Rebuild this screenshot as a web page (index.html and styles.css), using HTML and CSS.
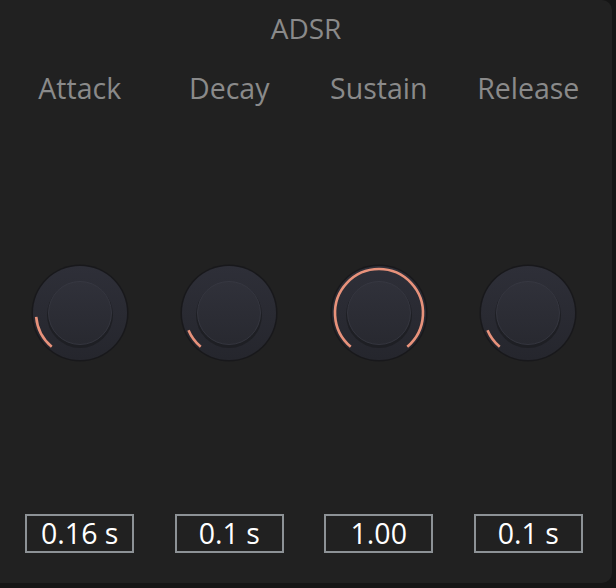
FILE: index.html
```html
<!DOCTYPE html>
<html lang="en">

<head>
  <meta charset="UTF-8">
  <meta name="viewport" content="width=device-width, initial-scale=1.0">
  <title>ADSR</title>
  <link rel="stylesheet" href="styles.css">
</head>

<body>

  <div class="panel">
    <h1 class="title">ADSR</h1>

    <!-- envelope strips -->
    <div class="strips">

      <div class="strip">
        <p class="label">Attack</p>
        <svg class="knob" viewBox="0 0 100 100" width="100" height="100">
          <defs>
            <linearGradient id="body" x1="0" y1="0" x2="0" y2="1">
              <stop offset="0" stop-color="#2e2f38" />
              <stop offset="1" stop-color="#25262d" />
            </linearGradient>
            <linearGradient id="cap" x1="0" y1="0" x2="0" y2="1">
              <stop offset="0" stop-color="#30313a" />
              <stop offset="1" stop-color="#282930" />
            </linearGradient>
          </defs>
          <circle cx="50" cy="50" r="48.5" fill="#18181b" />
          <circle cx="50" cy="50" r="47" fill="url(#body)" />
          <path class="arc" d="M21.72 83.70 A44 44 0 0 1 6.17 53.83" />
          <circle cx="50" cy="52" r="33" fill="#1e1f24" />
          <circle class="cap" cx="50" cy="50" r="31.5" fill="url(#cap)" />
        </svg>
        <div class="value">0.16 s</div>
      </div>

      <div class="strip">
        <p class="label">Decay</p>
        <svg class="knob" viewBox="0 0 100 100" width="100" height="100">
          <circle cx="50" cy="50" r="48.5" fill="#18181b" />
          <circle cx="50" cy="50" r="47" fill="url(#body)" />
          <path class="arc" d="M21.72 83.70 A44 44 0 0 1 9.50 67.19" />
          <circle cx="50" cy="52" r="33" fill="#1e1f24" />
          <circle class="cap" cx="50" cy="50" r="31.5" fill="url(#cap)" />
        </svg>
        <div class="value">0.1 s</div>
      </div>

      <div class="strip">
        <p class="label">Sustain</p>
        <svg class="knob" viewBox="0 0 100 100" width="100" height="100">
          <circle cx="50" cy="50" r="48.5" fill="#18181b" />
          <circle cx="50" cy="50" r="47" fill="url(#body)" />
          <path class="arc" d="M21.72 83.70 A44 44 0 1 1 78.28 83.70" />
          <circle cx="50" cy="52" r="33" fill="#1e1f24" />
          <circle class="cap" cx="50" cy="50" r="31.5" fill="url(#cap)" />
        </svg>
        <div class="value">1.00</div>
      </div>

      <div class="strip">
        <p class="label">Release</p>
        <svg class="knob" viewBox="0 0 100 100" width="100" height="100">
          <circle cx="50" cy="50" r="48.5" fill="#18181b" />
          <circle cx="50" cy="50" r="47" fill="url(#body)" />
          <path class="arc" d="M21.72 83.70 A44 44 0 0 1 9.50 67.19" />
          <circle cx="50" cy="52" r="33" fill="#1e1f24" />
          <circle class="cap" cx="50" cy="50" r="31.5" fill="url(#cap)" />
        </svg>
        <div class="value">0.1 s</div>
      </div>

    </div>
  </div>

</body>

</html>
```

FILE: styles.css
```css
body {
  margin: 0;
  background-color: #151515;
  font-family: "Open Sans", "Noto Sans", sans-serif;
}

.panel {
  width: 612px;
  height: 583px;
  box-sizing: border-box;
  padding: 10px 0 30px 5px;
  background-color: #212121;
  border-radius: 0 10px 10px 0;
}

.title {
  margin: 0;
  padding-right: 5px;
  font-size: 28px;
  font-weight: 400;
  line-height: 37px;
  text-align: center;
  color: #8a8a8a;
}

.strips {
  display: grid;
  grid-template-columns: repeat(4, 149.5px);
  margin-top: 23px;
}

.strip {
  display: flex;
  flex-direction: column;
  align-items: center;
}

.label {
  margin: 0;
  font-size: 28.5px;
  line-height: 37px;
  color: #8a8a8a;
}

.knob {
  display: block;
  margin-top: 156px;
}

.arc {
  fill: none;
  stroke: #e8927b;
  stroke-width: 2.6;
}

.cap {
  stroke: #393a44;
  stroke-width: 0.8;
}

.value {
  margin-top: 151px;
  width: 109px;
  height: 39px;
  box-sizing: border-box;
  border: 2px solid #8d9296;
  font-size: 28.5px;
  line-height: 35px;
  text-align: center;
  color: #ffffff;
}
```
